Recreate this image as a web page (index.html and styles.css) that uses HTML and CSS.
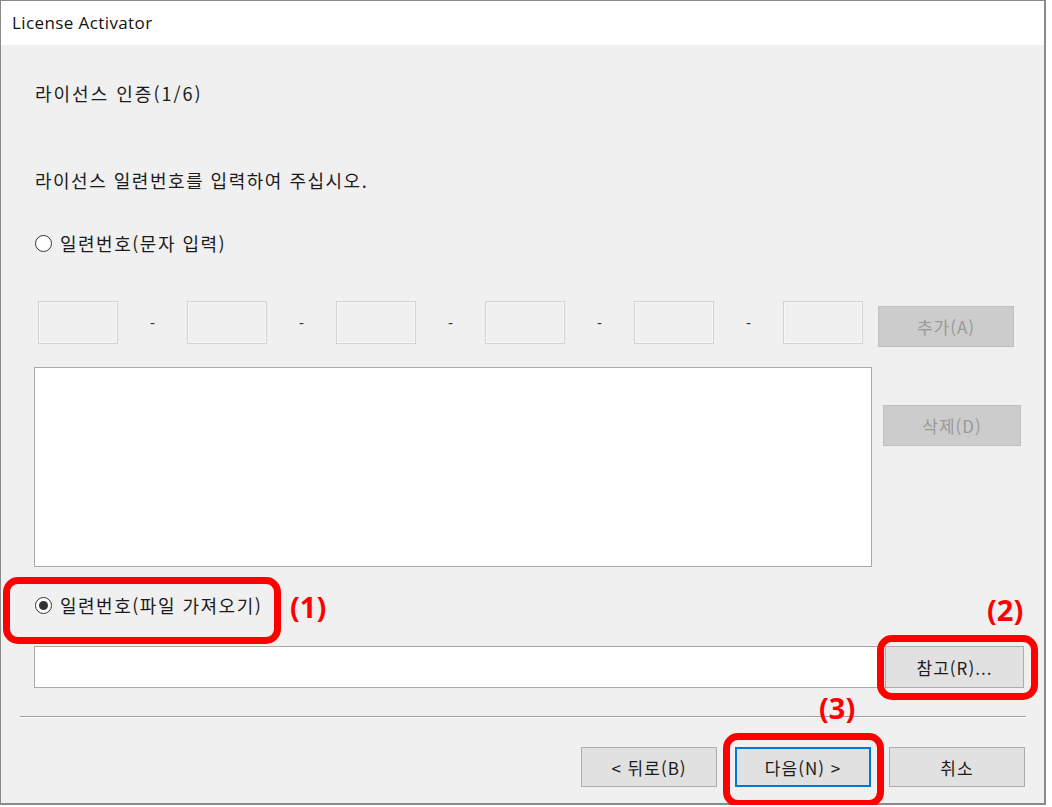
FILE: index.html
```html
<!DOCTYPE html>
<html lang="ko">
<head>
<meta charset="utf-8">
<title>License Activator</title>
<link rel="stylesheet" href="styles.css">
</head>
<body>
<div class="window">
  <div class="titlebar">License Activator</div>
  <div class="content">
    <div class="heading">라이선스 인증(1/6)</div>
    <div class="instruction">라이선스 일련번호를 입력하여 주십시오.</div>
    <div class="radio-row first">
      <span class="radio"></span>
      <span class="radio-label">일련번호(문자 입력)</span>
    </div>
    <div class="serial-row">
      <div class="serial-box"></div><div class="dash">-</div>
      <div class="serial-box"></div><div class="dash">-</div>
      <div class="serial-box"></div><div class="dash">-</div>
      <div class="serial-box"></div><div class="dash">-</div>
      <div class="serial-box"></div><div class="dash">-</div>
      <div class="serial-box"></div>
      <div class="btn disabled add-btn">추가(A)</div>
    </div>
    <div class="list-row">
      <div class="listbox"></div>
      <div class="btn disabled del-btn">삭제(D)</div>
    </div>
    <div class="radio-row second">
      <span class="radio checked"></span>
      <span class="radio-label">일련번호(파일 가져오기)</span>
    </div>
    <div class="file-row">
      <div class="file-input"></div>
      <div class="btn browse-btn">참고(R)...</div>
    </div>
    <div class="separator"></div>
    <div class="bottom-row">
      <div class="btn nav-btn">&lt; 뒤로(B)</div>
      <div class="btn nav-btn default">다음(N) &gt;</div>
      <div class="btn nav-btn">취소</div>
    </div>
  </div>
  <div class="mark mark1"></div>
  <div class="mark mark2"></div>
  <div class="mark mark3"></div>
  <div class="mark-label label1">(1)</div>
  <div class="mark-label label2">(2)</div>
  <div class="mark-label label3">(3)</div>
</div>
</body>
</html>
```

FILE: styles.css
```css
html, body {
  margin: 0;
  padding: 0;
  background: #ffffff;
}

body {
  font-family: "Noto Sans CJK KR", "Noto Sans", sans-serif;
  color: #1b1b1b;
}

.window {
  position: relative;
  width: 1043px;
  height: 802px;
  border-top: 1px solid #8a8a8a;
  border-left: 1px solid #8a8a8a;
  border-right: 2px solid #8a8a8a;
  border-bottom: 2px solid #8a8a8a;
  display: flex;
  flex-direction: column;
  background: #f0f0f0;
}

.titlebar {
  height: 44px;
  line-height: 44px;
  background: #ffffff;
  padding-left: 11px;
  font-family: "Open Sans", "Noto Sans", sans-serif;
  font-size: 17px;
  letter-spacing: 0.4px;
  color: #111;
}

.content {
  flex: 1;
  display: flex;
  flex-direction: column;
  background: #f0f0f0;
}

.heading {
  margin: 36px 0 0 34px;
  height: 24px;
  line-height: 24px;
  font-size: 18px;
  letter-spacing: 2px;
}

.instruction {
  margin: 63px 0 0 34px;
  height: 24px;
  line-height: 24px;
  font-size: 18px;
  letter-spacing: 1.5px;
}

.radio-row {
  display: flex;
  align-items: center;
  height: 24px;
  margin-left: 34px;
}

.radio-row.first { margin-top: 39px; }
.radio-row.second { margin-top: 26px; }

.radio {
  width: 15px;
  height: 15px;
  border: 1.5px solid #333;
  border-radius: 50%;
  background: #ffffff;
  display: flex;
  align-items: center;
  justify-content: center;
}

.radio.checked::after {
  content: "";
  width: 9px;
  height: 9px;
  border-radius: 50%;
  background: #333;
}

.radio-label {
  margin-left: 8px;
  font-size: 18px;
  line-height: 24px;
  letter-spacing: 1.5px;
}

.serial-row {
  display: flex;
  align-items: flex-start;
  margin: 46px 0 0 37px;
  height: 46px;
}

.serial-box {
  width: 78px;
  height: 41px;
  border: 1px solid #d2d2d2;
  box-shadow: inset 0 0 0 1px #f8f8f8;
  background: #f0f0f0;
}

.dash {
  width: 69px;
  height: 43px;
  line-height: 43px;
  text-align: center;
  font-family: "Liberation Sans", sans-serif;
  font-size: 15px;
  color: #333;
}

.btn {
  display: flex;
  align-items: center;
  justify-content: center;
  box-sizing: border-box;
  font-size: 17px;
  letter-spacing: 1px;
  background: #e1e1e1;
  border: 1px solid #adadad;
  color: #1b1b1b;
}

.btn.disabled {
  background: #cccccc;
  border: 1px solid #bfbfbf;
  color: #9a9a9a;
}

.add-btn {
  width: 136px;
  height: 41px;
  margin: 5px 0 0 15px;
}

.list-row {
  display: flex;
  align-items: flex-start;
  margin: 20px 0 0 33px;
}

.listbox {
  width: 836px;
  height: 198px;
  background: #ffffff;
  border: 1px solid #a8a8a8;
}

.del-btn {
  width: 138px;
  height: 41px;
  margin: 38px 0 0 11px;
}

.file-row {
  display: flex;
  margin: 29px 0 0 33px;
}

.file-input {
  width: 844px;
  height: 40px;
  background: #ffffff;
  border: 1px solid #a8a8a8;
}

.browse-btn {
  width: 139px;
  height: 42px;
  margin-left: 5px;
}

.separator {
  margin: 28px 0 0 19px;
  width: 1006px;
  height: 1px;
  background: #a0a0a0;
  border-bottom: 1px solid #ffffff;
}

.bottom-row {
  display: flex;
  gap: 18px;
  margin: 29px 0 0 580px;
}

.nav-btn {
  width: 136px;
  height: 40px;
}

.nav-btn.default {
  border: 2px solid #0078d7;
}

.mark {
  position: absolute;
  box-sizing: border-box;
  border: 7px solid #ff0000;
  border-radius: 15px;
}

.mark1 {
  left: 2px;
  top: 576px;
  width: 278px;
  height: 67px;
}

.mark2 {
  left: 876px;
  top: 634px;
  width: 161px;
  height: 65px;
}

.mark3 {
  left: 722px;
  top: 732px;
  width: 161px;
  height: 74px;
}

.mark-label {
  position: absolute;
  font-family: "Open Sans", "Noto Sans", sans-serif;
  font-weight: 700;
  font-size: 29px;
  line-height: 32px;
  color: #ff0000;
}

.label1 { left: 289px; top: 590px; }
.label2 { left: 986px; top: 593px; }
.label3 { left: 818px; top: 691px; }
```
